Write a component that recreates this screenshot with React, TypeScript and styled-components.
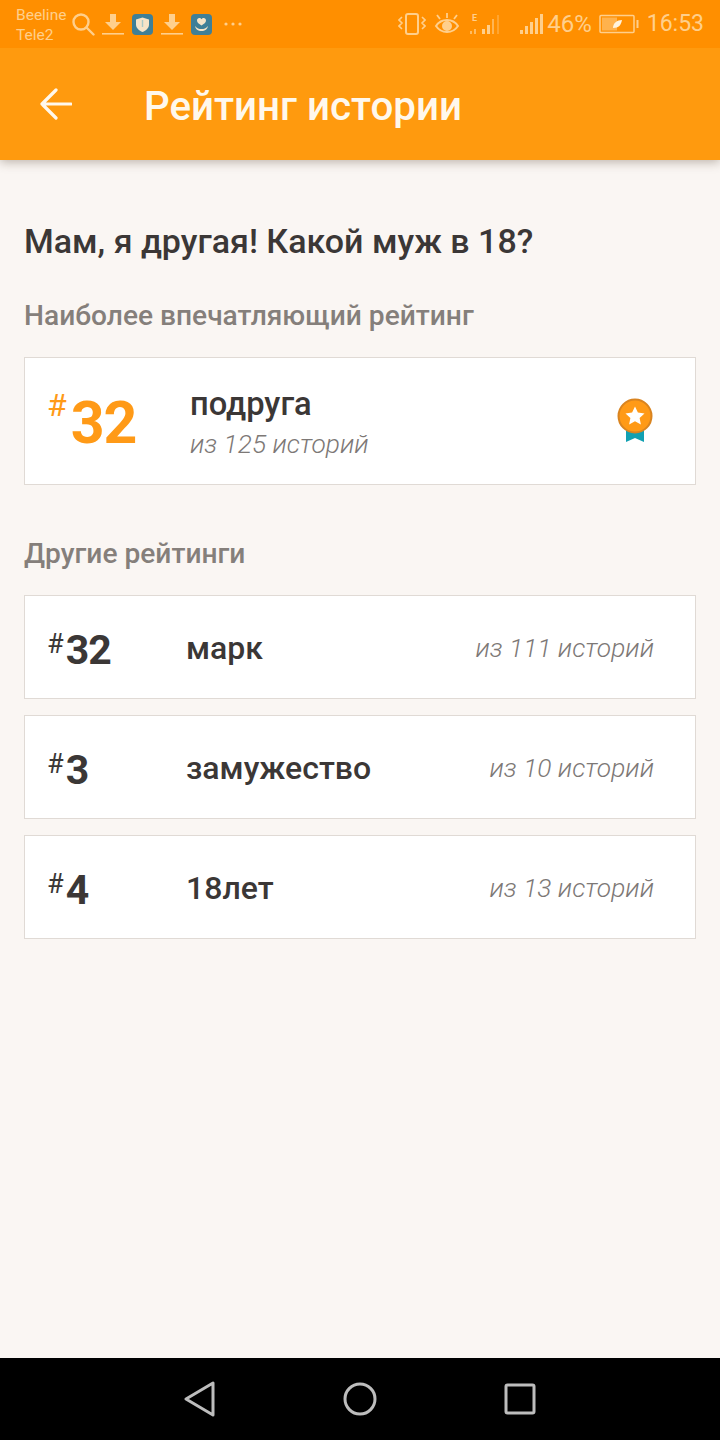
import styled, { createGlobalStyle } from 'styled-components'

const GlobalStyle = createGlobalStyle`
  html, body { margin: 0; padding: 0; }
  body { font-family: Roboto, "Liberation Sans", sans-serif; background: #faf6f3; }
`

const Screen = styled.div`
  width: 720px;
  height: 1440px;
  display: flex;
  flex-direction: column;
  overflow: hidden;
`

const StatusBar = styled.div`
  height: 48px;
  flex: none;
  background: #ff8f00;
  color: #ffcf8c;
  display: flex;
  justify-content: space-between;
  align-items: center;
  padding: 0 16px;
  position: relative;
  z-index: 1;
`

const StatusGroup = styled.div`
  display: flex;
  align-items: center;
`

const Carriers = styled.div`
  width: 55px;
  font-size: 15.5px;
  line-height: 20px;
  margin-top: 2px;
`

const StatusIcon = styled.svg<{ $gap?: number }>`
  display: block;
  flex: none;
  margin-left: ${p => p.$gap ?? 0}px;
`

const AppBadge = styled.div<{ $gap: number }>`
  width: 21px;
  height: 21px;
  border-radius: 4px;
  background: #3f7f97;
  flex: none;
  display: flex;
  align-items: center;
  justify-content: center;
  margin-left: ${p => p.$gap}px;
`

const StatusText = styled.span<{ $size: number; $gap: number }>`
  font-size: ${p => p.$size}px;
  margin-left: ${p => p.$gap}px;
  line-height: 48px;
`

const Toolbar = styled.header`
  height: 112px;
  flex: none;
  background: #ff9a0e;
  display: flex;
  align-items: center;
  padding: 0 0 0 40px;
  box-sizing: border-box;
  box-shadow: 0 2px 10px rgba(70, 50, 30, 0.35);
  position: relative;
`

const ToolbarTitle = styled.h1`
  margin: 4px 0 0 72px;
  font-size: 40.3px;
  font-weight: 500;
  color: #fff8ec;
`

const Content = styled.main`
  flex: 1;
  padding: 60px 24px 0;
  display: flex;
  flex-direction: column;
`

const StoryTitle = styled.h2`
  margin: 0;
  font-size: 34px;
  line-height: 42px;
  font-weight: 500;
  color: #3b3736;
`

const SectionLabel = styled.h3<{ $top: number }>`
  margin: ${p => p.$top}px 0 25px;
  font-size: 28.15px;
  line-height: 32px;
  font-weight: 500;
  color: #857f7b;
`

const Card = styled.div`
  background: #fff;
  border: 1px solid #e0dad5;
  box-sizing: border-box;
`

const TopCard = styled(Card)`
  height: 128px;
  display: flex;
  align-items: center;
  padding: 0 42px 0 23px;
`

const RankRow = styled(Card)`
  height: 104px;
  margin-bottom: 16px;
  display: flex;
  align-items: center;
  padding: 2px 41px 0 23px;
`

const Rank = styled.div<{ $big?: boolean }>`
  width: ${p => (p.$big ? 142 : 138)}px;
  flex: none;
  display: flex;
  color: ${p => (p.$big ? '#ff9a17' : '#3b3736')};
  font-weight: 700;
  font-size: ${p => (p.$big ? 59 : 41)}px;
  letter-spacing: -1px;
  line-height: ${p => (p.$big ? 68 : 50)}px;
  margin-top: 4px;
`

const Hash = styled.span<{ $big?: boolean }>`
  font-size: ${p => (p.$big ? 32 : 27)}px;
  font-weight: 400;
  letter-spacing: 0;
  line-height: 30px;
  margin-left: -1px;
  margin-right: ${p => (p.$big ? 4 : 2)}px;
  margin-top: ${p => (p.$big ? 1 : 4)}px;
`

const TopText = styled.div`
  flex: 1;
  display: flex;
  flex-direction: column;
  margin-top: 8px;
`

const TagName = styled.div<{ $big?: boolean }>`
  font-size: ${p => (p.$big ? 32.7 : 32)}px;
  line-height: 38px;
  font-weight: 500;
  color: #3b3736;
  flex: 1;
`

const StoryCount = styled.div`
  font-size: 26.3px;
  line-height: 42px;
  font-weight: 300;
  font-style: italic;
  color: #7d7876;
`

const NavBar = styled.nav`
  height: 82px;
  flex: none;
  background: #000;
  display: grid;
  grid-template-columns: 320px 80px 320px;
  align-items: center;
  justify-items: center;
`

const NavSlot = styled.div<{ $align: string; $pad: number }>`
  width: 100%;
  display: flex;
  justify-content: ${p => p.$align};
  padding: 0 ${p => p.$pad}px;
  box-sizing: border-box;
`

const rows = [
  { rank: '32', name: 'марк', total: 'из 111 историй' },
  { rank: '3', name: 'замужество', total: 'из 10 историй' },
  { rank: '4', name: '18лет', total: 'из 13 историй' },
]

function DownloadIcon({ gap }: { gap: number }) {
  return (
    <StatusIcon $gap={gap} width="22" height="24" viewBox="0 0 22 24" fill="#ffcf8c">
      <path d="M8 2h6v8h5l-8 8-8-8h5z" />
      <rect x="0" y="21" width="22" height="1.6" />
    </StatusIcon>
  )
}

function App() {
  return (
    <Screen>
      <GlobalStyle />
      <StatusBar>
        <StatusGroup>
          <Carriers>Beeline<br />Tele2</Carriers>
          <StatusIcon width="24" height="24" viewBox="0 0 24 24" fill="none" stroke="#ffcf8c" strokeWidth="2.4">
            <circle cx="10" cy="10" r="7.5" />
            <path d="M15.5 15.5l7 7" strokeLinecap="round" />
          </StatusIcon>
          <DownloadIcon gap={7} />
          <AppBadge $gap={8}>
            <svg width="15" height="15" viewBox="0 0 15 15" fill="#f6e4c8">
              <path d="M7.5 0.5l6.5 2v5c0 3.5-3 6-6.5 7.5C4 13.500 1 11 1 7.500v-5z" />
              <rect x="6.800" y="3" width="1.400" height="7" fill="#a9c9c6" />
            </svg>
          </AppBadge>
          <DownloadIcon gap={8} />
          <AppBadge $gap={8}>
            <svg width="15" height="15" viewBox="0 0 15 15" fill="#f6e4c8">
              <path d="M7.500 8.500C5 7 3 5.500 3 3.500 3 2 4 1 5.300 1c1 0 1.700.5 2.200 1.300C8 1.500 8.700 1 9.700 1 11 1 12 2 12 3.500c0 2-2 3.500-4.500 5z" />
              <path d="M1 9c2 2.500 4 3 6.500 3S12 11.500 14 9c-.5 3-3 5-6.500 5S1.500 12 1 9z" />
            </svg>
          </AppBadge>
          <StatusIcon $gap={11} width="20" height="6" viewBox="0 0 20 6" fill="#ffcf8c">
            <circle cx="3" cy="3" r="1.600" />
            <circle cx="10" cy="3" r="1.600" />
            <circle cx="17" cy="3" r="1.600" />
          </StatusIcon>
        </StatusGroup>
        <StatusGroup>
          <StatusIcon width="28" height="24" viewBox="0 0 28 24" fill="none" stroke="#ffcf8c" strokeWidth="2">
            <rect x="8" y="2" width="12" height="20" rx="2" />
            <path d="M4 5l-3 3 3 3-3 3 3 3M24 5l3 3-3 3 3 3-3 3" strokeWidth="1.600" />
          </StatusIcon>
          <StatusIcon $gap={8} width="26" height="24" viewBox="0 0 26 24" fill="none" stroke="#ffcf8c" strokeWidth="2">
            <path d="M2 14c3-4.500 7-6 11-6s8 1.500 11 6c-3 4.500-7 6-11 6s-8-1.500-11-6z" />
            <circle cx="13" cy="14" r="4" fill="#ffcf8c" />
            <path d="M3 3l3 4M13 1v5M23 3l-3 4" strokeWidth="1.800" />
          </StatusIcon>
          <StatusIcon $gap={9} width="32" height="24" viewBox="0 0 32 24" fill="#ffcf8c">
            <text x="3" y="9" fontSize="9" fontWeight="700" fontFamily="Roboto, sans-serif">E</text>
            <rect x="1" y="19" width="2" height="3" opacity=".7" />
            <rect x="5" y="17" width="2" height="5" opacity=".7" />
            <rect x="13" y="17" width="3" height="5" />
            <rect x="18" y="13" width="3" height="9" />
            <rect x="23" y="7" width="2" height="15" opacity=".6" />
            <rect x="28" y="3" width="2" height="19" opacity=".35" />
          </StatusIcon>
          <StatusIcon $gap={19} width="25" height="24" viewBox="0 0 25 24" fill="#ffcf8c">
            <rect x="0" y="18" width="3" height="4" />
            <rect x="5" y="14" width="3" height="8" />
            <rect x="10" y="10" width="3" height="12" />
            <rect x="15" y="6" width="3" height="16" />
            <rect x="20" y="2" width="3" height="20" />
          </StatusIcon>
          <StatusText $size={24} $gap={2}>46%</StatusText>
          <StatusIcon $gap={7} width="40" height="20" viewBox="0 0 40 20" fill="none">
            <rect x="1" y="1.500" width="34" height="17" rx="1" stroke="#ffcf8c" strokeWidth="1.500" />
            <rect x="3" y="3.500" width="15" height="13" fill="#ffcf8c" opacity=".55" />
            <path d="M14 14c0-5 4-8 9-8-1 5-3 8-9 8z" fill="#fff3dd" />
            <rect x="37.500" y="6" width="2" height="8" fill="#ffcf8c" />
          </StatusIcon>
          <StatusText $size={23} $gap={8}>16:53</StatusText>
        </StatusGroup>
      </StatusBar>

      <Toolbar>
        <svg width="32" height="32" viewBox="0 0 32 32" fill="none" stroke="#fff8ec" strokeWidth="3.200" strokeLinecap="round" strokeLinejoin="round">
          <path d="M31 16H2M16 2L2 16l14 14" />
        </svg>
        <ToolbarTitle>Рейтинг истории</ToolbarTitle>
      </Toolbar>

      <Content>
        <StoryTitle>Мам, я другая! Какой муж в 18?</StoryTitle>
        <SectionLabel $top={38}>Наиболее впечатляющий рейтинг</SectionLabel>
        <TopCard>
          <Rank $big><Hash $big>#</Hash>32</Rank>
          <TopText>
            <TagName $big>подруга</TagName>
            <StoryCount>из 125 историй</StoryCount>
          </TopText>
          <svg width="36" height="46" viewBox="0 0 36 46">
            <path d="M9 26h18v18l-9-4-9 4z" fill="#11a0b2" />
            <circle cx="18" cy="18" r="16.500" fill="#ff9a17" stroke="#d98420" strokeWidth="2" />
            <path d="M18 8.500l2.900 6.100 6.600.8-4.900 4.600 1.300 6.600-5.900-3.300-5.900 3.300 1.300-6.600-4.900-4.600 6.600-.8z" fill="#fff" />
          </svg>
        </TopCard>

        <SectionLabel $top={53}>Другие рейтинги</SectionLabel>
        {rows.map(row => (
          <RankRow key={row.name}>
            <Rank><Hash>#</Hash>{row.rank}</Rank>
            <TagName>{row.name}</TagName>
            <StoryCount>{row.total}</StoryCount>
          </RankRow>
        ))}
      </Content>

      <NavBar>
        <NavSlot $align="flex-end" $pad={104}>
          <svg width="32" height="36" viewBox="0 0 32 36" fill="none" stroke="#bdbdbd" strokeWidth="3" strokeLinejoin="round">
            <path d="M29 2v32L2 18z" />
          </svg>
        </NavSlot>
        <svg width="34" height="34" viewBox="0 0 34 34" fill="none" stroke="#bdbdbd" strokeWidth="3">
          <circle cx="17" cy="17" r="15" />
        </svg>
        <NavSlot $align="flex-start" $pad={104}>
          <svg width="32" height="32" viewBox="0 0 32 32" fill="none" stroke="#bdbdbd" strokeWidth="3" strokeLinejoin="round">
            <rect x="2" y="2" width="28" height="28" rx="1.500" />
          </svg>
        </NavSlot>
      </NavBar>
    </Screen>
  )
}

export default App
